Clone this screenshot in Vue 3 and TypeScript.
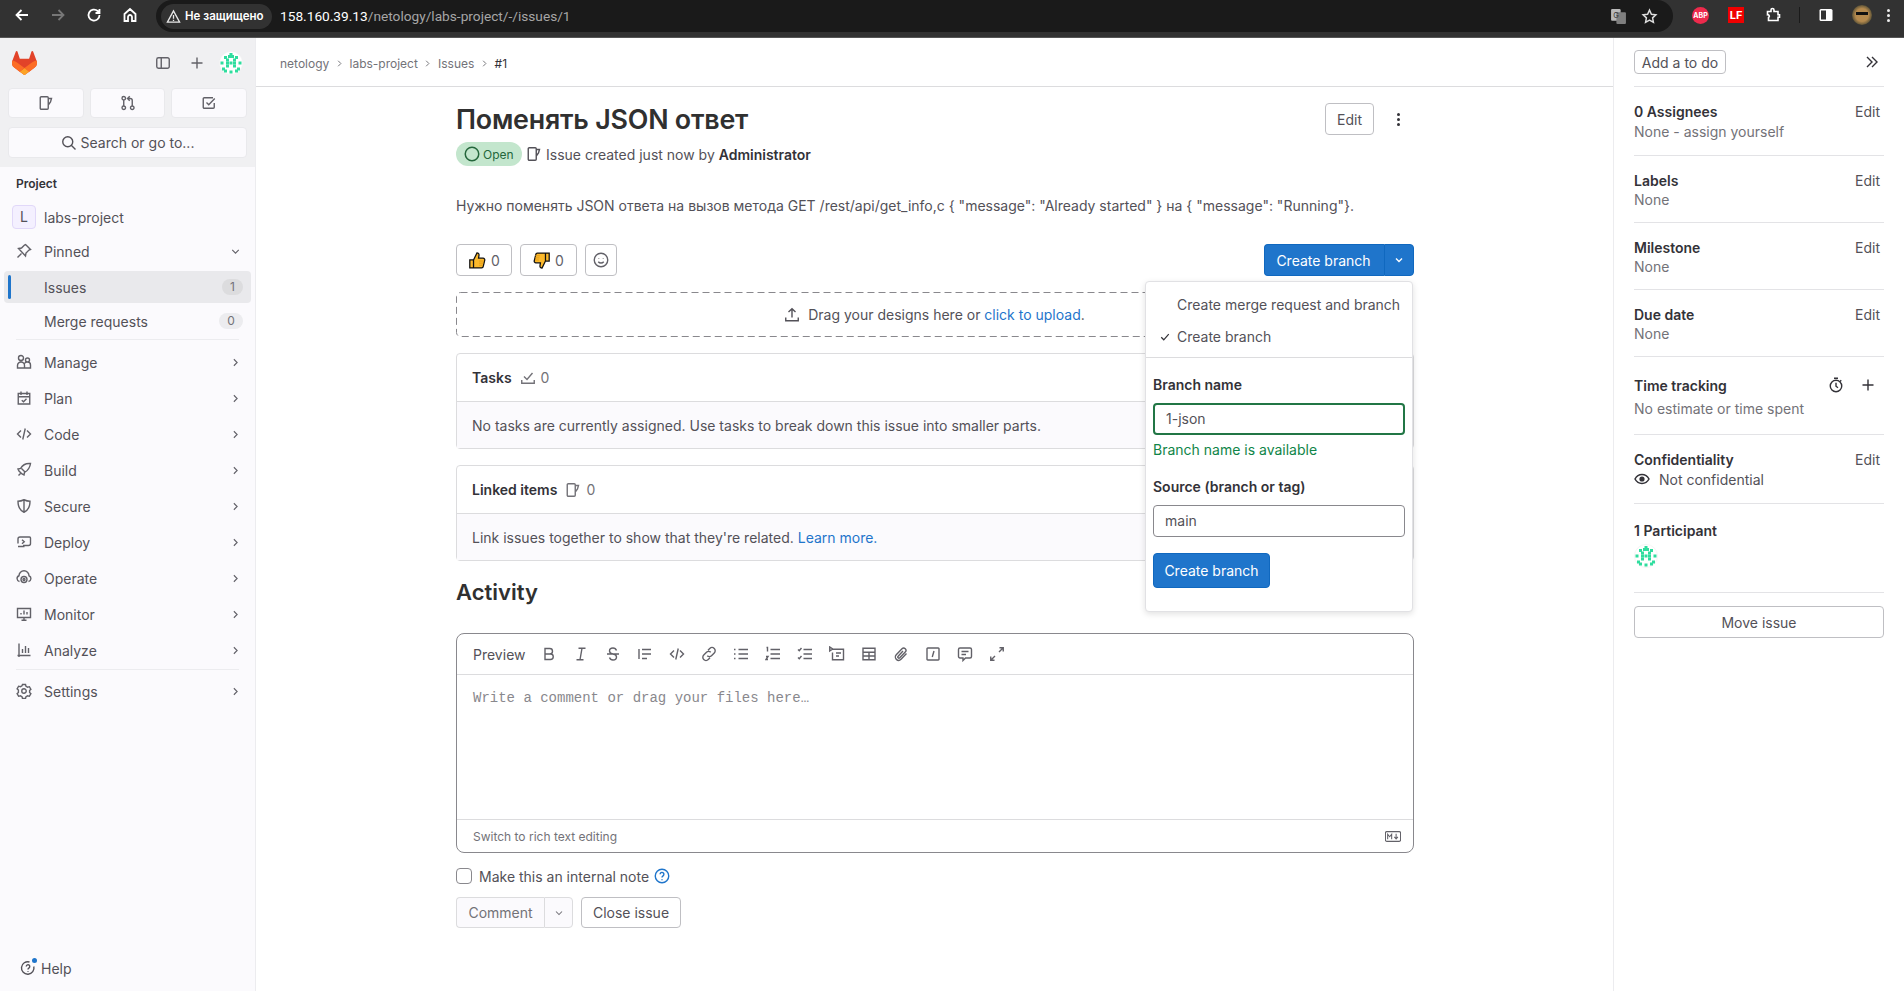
<template>
  <div class="app">
    <header class="browser">
      <svg class="ico chrome-ico" viewBox="0 0 16 16"><path d="M14 8H2.5M7.5 3 2.5 8l5 5" /></svg>
      <svg class="ico chrome-ico dim" viewBox="0 0 16 16"><path d="M2 8h11.5M8.5 3l5 5-5 5" /></svg>
      <svg class="ico chrome-ico" viewBox="0 0 16 16"><path d="M13.5 8A5.5 5.5 0 1 1 11.7 4L13.5 6M13.5 2v4h-4" /></svg>
      <svg class="ico chrome-ico" viewBox="0 0 16 16"><path d="M2.5 7 8 2l5.5 5v7h-3.5v-4a2 2 0 0 0-4 0v4H2.5z" /></svg>
      <div class="omnibox">
        <div class="secure">
          <svg class="warn" viewBox="0 0 16 16"><path d="M8 2 1.5 14h13zM8 6.5v4M8 11.5v1.2" /></svg>
          <span>Не защищено</span>
        </div>
        <div class="url"><b>158.160.39.13</b>/netology/labs-project/-/issues/1</div>
        <svg class="translate" viewBox="0 0 16 16">
          <rect x="1" y="1" width="9" height="11" rx="1" fill="#b9b9b9" />
          <rect x="6" y="4" width="9" height="11" rx="1" fill="#7f7f7f" />
          <text x="3" y="9" font-size="7" fill="#333">G</text>
        </svg>
        <svg class="ico star" viewBox="0 0 16 16"><path d="M8 2l1.8 3.9 4.2.5-3.1 2.9.8 4.2L8 11.4l-3.7 2.1.8-4.2L2 6.4l4.2-.5z" /></svg>
      </div>
      <div class="ext-bar">
        <span class="abp">ABP</span>
        <span class="lf">LF</span>
        <svg class="ico ext" viewBox="0 0 16 16"><path d="M2.5 4.5H6V3a1.5 1.5 0 0 1 3 0v1.5h4v3.2h1.5v2.6H13v3.2H3.5v-3a1.5 1.5 0 0 0-1-2.8z" /></svg>
        <i class="sep"></i>
        <svg class="panel" viewBox="0 0 16 16"><rect x="1.5" y="2" width="13" height="12" rx="1.5" fill="#fff" /><rect x="3" y="3.5" width="5" height="9" fill="#323232" /></svg>
        <span class="me"><i></i></span>
        <span class="kebab-w"><i></i><i></i><i></i></span>
      </div>
    </header>

    <div class="page">
      <aside class="nav">
        <div class="nav-top">
          <div class="nav-brand">
            <svg class="logo" viewBox="0 0 25 24">
              <path fill="#E24329" d="m24.507 9.5-.034-.09L21.082.562a.896.896 0 0 0-1.694.091l-2.29 7.01H7.825L5.535.653a.898.898 0 0 0-1.694-.09L.451 9.411.416 9.5a6.297 6.297 0 0 0 2.09 7.278l.012.01.03.022 5.16 3.867 2.56 1.935 1.554 1.176a1.051 1.051 0 0 0 1.268 0l1.555-1.176 2.56-1.935 5.197-3.89.014-.01A6.297 6.297 0 0 0 24.507 9.5Z" />
              <path fill="#FC6D26" d="m24.507 9.5-.034-.09a11.44 11.44 0 0 0-4.56 2.051l-7.447 5.632 4.742 3.584 5.197-3.89.014-.01A6.297 6.297 0 0 0 24.507 9.5Z" />
              <path fill="#FCA326" d="m7.707 20.677 2.56 1.935 1.555 1.176a1.051 1.051 0 0 0 1.268 0l1.555-1.176 2.56-1.935-4.743-3.584-4.755 3.584Z" />
              <path fill="#FC6D26" d="M5.01 11.461a11.43 11.43 0 0 0-4.56-2.05L.416 9.5a6.297 6.297 0 0 0 2.09 7.278l.012.01.03.022 5.16 3.867 4.745-3.584-7.444-5.632Z" />
            </svg>
            <svg class="ico brand-panel" viewBox="0 0 16 16"><path :d="icons.panel" /></svg>
            <svg class="ico brand-plus" viewBox="0 0 16 16"><path :d="icons.plus" /></svg>
            <svg class="avatar" viewBox="0 0 24 24">
              <circle cx="12" cy="12" r="11.6" fill="#fff" stroke="#eeeeef" stroke-width=".6" />
              <rect v-for="c in identicon" :key="c" :x="c.split(',')[0]" :y="c.split(',')[1]" width="3" height="3" fill="#2fdd9e" />
            </svg>
          </div>
          <div class="quick">
            <button v-for="q in quick" :key="q"><svg class="ico" viewBox="0 0 16 16"><path :d="icons[q]" /></svg></button>
          </div>
          <div class="search">
            <svg class="ico" viewBox="0 0 16 16"><path :d="icons.search" /></svg>
            <span>Search or go to...</span>
          </div>
        </div>

        <div class="nav-list">
          <div class="nav-title">Project</div>
          <div class="nav-row project"><span class="p-badge">L</span><span>labs-project</span></div>
          <div class="nav-row pinned">
            <svg class="ico row-ico" viewBox="0 0 16 16"><path :d="icons.pin" /></svg>
            <span>Pinned</span>
            <svg class="ico chev" viewBox="0 0 16 16"><path :d="icons.down" /></svg>
          </div>
          <div class="sub-row active"><span>Issues</span><em>1</em></div>
          <div class="sub-row"><span>Merge requests</span><em class="wide">0</em></div>
          <hr />
          <div v-for="item in navItems" :key="item.label" class="nav-row tall">
            <svg class="ico row-ico" viewBox="0 0 16 16"><path :d="icons[item.icon]" /></svg>
            <span>{{ item.label }}</span>
            <svg class="ico chev" viewBox="0 0 16 16"><path :d="icons.right" /></svg>
          </div>
          <hr class="tight" />
          <div class="nav-row tall">
            <svg class="ico row-ico" viewBox="0 0 16 16"><path :d="icons.gear" /></svg>
            <span>Settings</span>
            <svg class="ico chev" viewBox="0 0 16 16"><path :d="icons.right" /></svg>
          </div>
        </div>

        <div class="help">
          <svg class="ico" viewBox="0 0 16 16"><path :d="icons.help" /></svg>
          <i class="dot"></i>
          <span>Help</span>
        </div>
      </aside>

      <main class="content">
        <nav class="crumbs">
          <span>netology</span><svg class="ico" viewBox="0 0 16 16"><path :d="icons.right" /></svg>
          <span>labs-project</span><svg class="ico" viewBox="0 0 16 16"><path :d="icons.right" /></svg>
          <span>Issues</span><svg class="ico" viewBox="0 0 16 16"><path :d="icons.right" /></svg>
          <strong>#1</strong>
        </nav>

        <div class="issue">
          <div class="title-row">
            <h1>Поменять JSON ответ</h1>
            <button class="btn edit">Edit</button>
            <span class="kebab"><i></i><i></i><i></i></span>
          </div>
          <div class="meta">
            <span class="status"><svg viewBox="0 0 16 16"><circle cx="8" cy="8" r="6.75" /></svg>Open</span>
            <svg class="ico meta-ico" viewBox="0 0 16 16"><path :d="icons.issue" /></svg>
            <span>Issue created just now by <b>Administrator</b></span>
          </div>
          <p class="desc">Нужно поменять JSON ответа на вызов метода GET /rest/api/get_info,c { "message": "Already started" } на { "message": "Running"}.</p>

          <div class="actions">
            <button class="btn award">
              <svg viewBox="0 0 16 16">
                <path class="thumb" d="M.75 7.5h3.5V15H.75zM4.25 7.5 7.5.9c1.4 0 2.1.9 1.9 2.2L9 5.8h4.3a1.6 1.6 0 0 1 1.5 2l-1.4 5.8a1.6 1.6 0 0 1-1.5 1.4H4.25z" />
                <path class="stripes" d="M9.5 8.5H14M9.5 10.5h4M9.5 12.5H13" />
              </svg>
              <span>0</span>
            </button>
            <button class="btn award">
              <svg viewBox="0 0 16 16">
                <path class="thumb" d="M15.25 8.5h-3.5V1h3.5zM11.75 8.5 8.5 15.1c-1.4 0-2.1-.9-1.9-2.2L7 10.2H2.7a1.6 1.6 0 0 1-1.5-2l1.4-5.8A1.6 1.6 0 0 1 4.1 1h7.65z" />
                <path class="stripes" d="M2 3.5h4.5M2 5.5h4M2 7.5h3.5" />
              </svg>
              <span>0</span>
            </button>
            <button class="btn smile"><svg class="ico" viewBox="0 0 16 16"><path :d="icons.smile" /></svg></button>
            <div class="split">
              <button class="split-main">Create branch</button>
              <button class="split-caret"><svg class="ico" viewBox="0 0 16 16"><path :d="icons.down" /></svg></button>
            </div>
            <div class="dropdown">
              <div class="dd-opts">
                <div class="dd-opt">Create merge request and branch</div>
                <div class="dd-opt"><svg class="ico" viewBox="0 0 16 16"><path d="M2 8.5l4 4 8-9" /></svg>Create branch</div>
              </div>
              <div class="dd-form">
                <label>Branch name</label>
                <div class="field ok">1-json</div>
                <div class="avail">Branch name is available</div>
                <label>Source (branch or tag)</label>
                <div class="field">main</div>
                <button class="form-btn">Create branch</button>
              </div>
            </div>
          </div>

          <div class="upload">
            <svg class="dashes"><rect x=".5" y=".5" rx="4" /></svg>
            <svg class="ico" viewBox="0 0 16 16"><path :d="icons.upload" /></svg>
            <span>Drag your designs here or <a>click to upload</a>.</span>
          </div>

          <section class="card">
            <div class="card-head"><b>Tasks</b><svg class="ico" viewBox="0 0 16 16"><path :d="icons.tasks" /></svg><span>0</span></div>
            <div class="card-body">No tasks are currently assigned. Use tasks to break down this issue into smaller parts.</div>
          </section>
          <section class="card linked">
            <div class="card-head"><b>Linked items</b><svg class="ico" viewBox="0 0 16 16"><path :d="icons.issue" /></svg><span>0</span></div>
            <div class="card-body">Link issues together to show that they're related. <a>Learn more.</a></div>
          </section>

          <h2>Activity</h2>

          <div class="editor">
            <div class="toolbar">
              <span class="preview">Preview</span>
              <span v-for="t in tools" :key="t" class="tool"><svg class="ico" viewBox="0 0 16 16"><path :d="icons[t]" /></svg></span>
            </div>
            <div class="placeholder">Write a comment or drag your files here…</div>
            <div class="editor-foot">
              <span>Switch to rich text editing</span>
              <svg class="md" viewBox="0 0 18 12"><rect x=".5" y=".5" width="17" height="11" rx="1.5" /><path d="M3 9V3.5l2.25 2.75L7.5 3.5V9M12.5 3v5.5M10.5 6.5l2 2.2 2-2.2" /></svg>
            </div>
          </div>

          <div class="note">
            <span class="check"></span>
            <span>Make this an internal note</span>
            <svg class="ico help-blue" viewBox="0 0 16 16"><path :d="icons.helpPlain" /></svg>
          </div>

          <div class="submit">
            <div class="comment-group">
              <button class="comment">Comment</button>
              <button class="comment-caret"><svg class="ico" viewBox="0 0 16 16"><path :d="icons.down" /></svg></button>
            </div>
            <button class="btn close">Close issue</button>
          </div>
        </div>
      </main>

      <aside class="side">
        <div class="side-top">
          <button class="btn todo">Add a to do</button>
          <svg class="ico" viewBox="0 0 16 16"><path d="M3 3l5 5-5 5M8 3l5 5-5 5" /></svg>
        </div>
        <section v-for="s in sideBlocks" :key="s.title" class="side-block" :class="s.cls">
          <div class="side-head"><b>{{ s.title }}</b><span>Edit</span></div>
          <div class="side-sub">{{ s.sub }}</div>
        </section>
        <section class="side-block time">
          <div class="side-head">
            <b>Time tracking</b>
            <svg class="ico watch" viewBox="0 0 16 16"><path :d="icons.timer" /></svg>
            <svg class="ico add" viewBox="0 0 16 16"><path :d="icons.plus" /></svg>
          </div>
          <div class="side-sub">No estimate or time spent</div>
        </section>
        <section class="side-block conf">
          <div class="side-head"><b>Confidentiality</b><span>Edit</span></div>
          <div class="side-conf">
            <svg viewBox="0 0 16 16"><path d="M1 8c1.6-3 4-4.5 7-4.5S13.4 5 15 8c-1.6 3-4 4.5-7 4.5S2.6 11 1 8z" fill="none" stroke="#333238" stroke-width="1.5" /><circle cx="8" cy="8" r="2.6" fill="#333238" /></svg>
            <span>Not confidential</span>
          </div>
        </section>
        <section class="side-block people">
          <div class="side-head"><b>1 Participant</b></div>
          <svg class="avatar" viewBox="0 0 24 24">
            <circle cx="12" cy="12" r="11.6" fill="#fff" stroke="#eeeeef" stroke-width=".6" />
            <rect v-for="c in identicon" :key="c" :x="c.split(',')[0]" :y="c.split(',')[1]" width="3" height="3" fill="#2fdd9e" />
          </svg>
        </section>
        <button class="btn move">Move issue</button>
      </aside>
    </div>
  </div>
</template>

<script setup lang="ts">
const circle = (cx: number, cy: number, r: number) =>
  `M${cx - r} ${cy}a${r} ${r} 0 1 0 ${2 * r} 0a${r} ${r} 0 1 0 ${-2 * r} 0`;

const icons: Record<string, string> = {
  panel: "M3.5 2.75h9a1.75 1.75 0 0 1 1.75 1.75v7a1.75 1.75 0 0 1-1.75 1.75h-9a1.75 1.75 0 0 1-1.75-1.75v-7A1.75 1.75 0 0 1 3.5 2.75zM6.25 2.75v10.5",
  plus: "M8 2.5v11M2.5 8h11",
  issue: "M3.25 1.75h6a1 1 0 0 1 1 1v10.5a1 1 0 0 1-1 1h-6a1 1 0 0 1-1-1V2.75a1 1 0 0 1 1-1zM10.25 3.5h3.25l-1 3.5-2.25 3",
  mr: `${circle(3.75, 3.25, 1.75)}${circle(3.75, 12.75, 1.75)}${circle(12.25, 12.75, 1.75)}M3.75 5v6M12.25 11V5.5a2 2 0 0 0-2-2H8M9.75 1.25 7.5 3.5l2.25 2.25`,
  todo: "M13.25 8v4.25a1 1 0 0 1-1 1h-9a1 1 0 0 1-1-1v-8.5a1 1 0 0 1 1-1H12M5.5 7.5l2.25 2.25L13.75 3.5",
  search: `${circle(6.75, 6.75, 5)}M10.5 10.5l4 4`,
  pin: "M9.5 1.5l5 5-1.5.5-3 3-.5 3L2.5 5.5l3-.5 3-3zM5.5 10.5l-4 4",
  down: "M4 6l4 4 4-4",
  right: "M6 4l4 4-4 4",
  users: `${circle(5, 4, 2.5)}${circle(11.5, 6, 2)}M1.5 14v-2.5A3.5 3.5 0 0 1 5 8a3.5 3.5 0 0 1 3.5 3.5V14zM8.5 14h6v-3a3 3 0 0 0-3-3 3 3 0 0 0-3 1.5`,
  plan: "M2.25 3.5h11.5v10.5H2.25zM5 1.5v3.5M11 1.5v3.5M2.25 6.75h11.5M5.75 10.25l1.75 1.5 3-3",
  code: "M5 4.5 1.5 8 5 11.5M11 4.5 14.5 8 11 11.5M9.25 2.5l-2.5 11",
  rocket: "M14.5 1.5c-5-.5-8 1.5-10 5l-2.5.5 1 2 3 3 2 1 .5-2.5c3.5-2 5.5-5 6-9zM2.5 13.5l2-2M5.5 6.5l4 4",
  shield: "M8 1.75c2 1 4 1.5 6 1.5 0 5-1.5 9-6 11-4.5-2-6-6-6-11 2 0 4-.5 6-1.5zM8 1.75v12.5",
  deploy: "M2 5a2 2 0 0 1 2-2h9.5a1 1 0 0 1 1 1v5.5a2 2 0 0 1-2 2H7M2 5v4.5M2 12.5h6.5M6 5.75 8.25 7.75 6 9.75",
  operate: `M3.5 11.5a3 3 0 0 1-.5-5.75 5 5 0 0 1 10 0 3 3 0 0 1-.5 5.75${circle(8, 9.5, 3)}${circle(8, 9.5, 1)}`,
  monitor: "M1.5 2.5h13v9h-13zM5.5 14.25h5M8 11.5v2.75M5 8.5V7M8 8.5V4.5M11 8.5V6",
  chart: "M1.5 13.5h13M3 1.5v13.5M6.5 7v4M9.5 4v7M12.5 6v5",
  gear: `M6.5 1.5h3l.5 1.8 1.6.9 1.8-.5 1.5 2.6-1.3 1.3v1.8l1.3 1.3-1.5 2.6-1.8-.5-1.6.9-.5 1.8h-3l-.5-1.8-1.6-.9-1.8.5-1.5-2.6 1.3-1.3V7.1L1.1 5.8l1.5-2.6 1.8.5L6 2.8z${circle(8, 8, 2.25)}`,
  help: "M13.8 6.5A6.25 6.25 0 1 1 9.5 2M6.25 6.5a1.75 1.75 0 1 1 2.8 1.4c-.6.4-1.05.8-1.05 1.6M8 11.2v.8",
  helpPlain: `${circle(8, 8, 6.75)}M6.1 6.3a1.9 1.9 0 1 1 3 1.55c-.65.45-1.1.85-1.1 1.65M8 11.3v.9`,
  smile: `${circle(8, 8, 6.75)}M5.25 9.75c1.5 1.7 4 1.7 5.5 0M5.75 6v.5M10.25 6v.5`,
  upload: "M8 10.5V1.75M4.5 5 8 1.75 11.5 5M1.75 10.5v3.25h12.5V10.5",
  tasks: "M1.75 10v3.25h12.5V10M4 6.5l3 3L12.5 3",
  bold: "M4 2.5h4.75a2.75 2.75 0 0 1 0 5.5H4zM4 8h5.5a2.75 2.75 0 0 1 0 5.5H4z",
  italic: "M5.5 2.25h7M3.5 13.75h7M9 2.25 7 13.75",
  strike: "M2 8h12M11.5 4.5C11 3 9.5 2 8 2 6 2 4.5 3.25 4.5 5c0 1.5 1 2.5 3.5 3s3.5 1.5 3.5 3c0 1.75-1.5 3-3.5 3-1.5 0-3-1-3.5-2.5",
  quote: "M2 3v10M5 3.5h9M5 8h9M5 12.5h5",
  link: "M7 4.25 8.75 2.5a3 3 0 0 1 4.5 4.5L10.5 9.75a3 3 0 0 1-4.25 0M9 11.75 7.25 13.5a3 3 0 0 1-4.5-4.5L5.5 6.25a3 3 0 0 1 4.25 0",
  ul: "M5.5 3.5H15M5.5 8H15M5.5 12.5H15M1 3.5h1.5M1 8h1.5M1 12.5h1.5",
  ol: "M5.5 3.5H15M5.5 8H15M5.5 12.5H15M1.5 1.5h1v4M1 10.5h2l-2 3h2",
  task: "M6.5 3.5H15M6.5 8H15M6.5 12.5H15M1 3.5l1.25 1.25L4.5 2M1 11.5l1.25 1.25L4.5 10",
  collapse: "M4 3.25h10.5v10.5H3.5V6.5M7 7h5M7 10h3M.75 1v4l3-2z",
  table: "M2 2.25h12v11.5H2zM2 6.25h12M2 10h12M8 6.25v7.5",
  attach: "M13.5 7.5 8 13.25a3.25 3.25 0 0 1-4.75-4.5L9 2.75a2.25 2.25 0 0 1 3.25 3.25l-5.5 5.75a1.1 1.1 0 0 1-1.6-1.6L10 5",
  slash: "M2.75 2h10.5a.75.75 0 0 1 .75.75v10.5a.75.75 0 0 1-.75.75H2.75a.75.75 0 0 1-.75-.75V2.75A.75.75 0 0 1 2.75 2zM9 5l-1.75 6",
  comment: "M3 2h10a1.5 1.5 0 0 1 1.5 1.5v7A1.5 1.5 0 0 1 13 12H8.5L6 14.5V12H3a1.5 1.5 0 0 1-1.5-1.5v-7A1.5 1.5 0 0 1 3 2zM4.5 5.5h7M4.5 8.5H9",
  expand: "M10 6l4-4M10.5 1.75h3.75V5.5M6 10l-4 4M1.75 10.5v3.75H5.5",
  timer: `${circle(8, 9, 5.75)}M6 1.25h4M8 5.75v3.5l2 1.5M12.25 3.25l1 1`,
};

const quick = ["issue", "mr", "todo"];

const navItems = [
  { label: "Manage", icon: "users" },
  { label: "Plan", icon: "plan" },
  { label: "Code", icon: "code" },
  { label: "Build", icon: "rocket" },
  { label: "Secure", icon: "shield" },
  { label: "Deploy", icon: "deploy" },
  { label: "Operate", icon: "operate" },
  { label: "Monitor", icon: "monitor" },
  { label: "Analyze", icon: "chart" },
];

const tools = ["bold", "italic", "strike", "quote", "code", "link", "ul", "ol", "task", "collapse", "table", "attach", "slash", "comment", "expand"];

const sideBlocks = [
  { title: "0 Assignees", sub: "None - assign yourself", cls: "first" },
  { title: "Labels", sub: "None", cls: "" },
  { title: "Milestone", sub: "None", cls: "" },
  { title: "Due date", sub: "None", cls: "" },
];

// x,y of the green cells in the generated user avatar
const identicon = [
  "10.5,2", "9,4", "12,4", "5,5", "16,5", "7,7.5", "14,7.5", "1.5,10.5", "7,10.5", "10.5,10.5", "14,10.5", "19.5,10.5",
  "7,13.5", "14,13.5", "3,16.5", "18,16.5", "5,18.5", "16,18.5", "10.5,19.5",
];
</script>

<style>
html,
body {
  margin: 0;
  background: #fff;
  overflow: hidden;
}
</style>

<style scoped>
.app {
  width: 1904px;
  height: 991px;
  font-family: Inter, "Noto Sans", sans-serif;
  font-size: 14px;
  color: #535158;
  overflow: hidden;
}

button {
  font: inherit;
  margin: 0;
}

.ico {
  width: 16px;
  height: 16px;
  fill: none;
  stroke: currentColor;
  stroke-width: 1.4;
  flex: none;
}

/* -------- browser chrome -------- */
.browser {
  height: 37px;
  background: #323232;
  border-bottom: 1px solid #555;
  display: flex;
  align-items: flex-start;
  padding-left: 14px;
  color: #fff;
}

.chrome-ico {
  width: 16px;
  height: 16px;
  margin: 7px 20px 0 0;
  stroke-width: 1.8;
}

.chrome-ico.dim {
  color: #777;
}

.omnibox {
  margin: 0 0 0 -2px;
  width: 1517px;
  height: 32px;
  background: #1a1a1a;
  border-radius: 16px;
  display: flex;
  align-items: center;
  padding-left: 5px;
  box-sizing: border-box;
  flex: none;
}

.secure {
  height: 25px;
  width: 111px;
  box-sizing: border-box;
  background: #323232;
  border-radius: 13px;
  display: flex;
  align-items: center;
  gap: 4px;
  padding-left: 5px;
  font-size: 11.5px;
  font-weight: 600;
  color: #fff;
  white-space: nowrap;
}

.warn {
  width: 15px;
  height: 15px;
  fill: none;
  stroke: #e8e8e8;
  stroke-width: 1.4;
  flex: none;
}

.url {
  margin-left: 8px;
  font-family: Roboto, sans-serif;
  font-size: 13.7px;
  color: #a6a6a6;
  white-space: nowrap;
}

.url b {
  font-weight: 400;
  color: #fff;
}

.translate {
  width: 17px;
  height: 17px;
  margin-left: auto;
}

.star {
  width: 17px;
  height: 17px;
  margin: 0 15px 0 14px;
  color: #ddd;
}

.ext-bar {
  display: flex;
  align-items: center;
  height: 30px;
  flex: 1;
}

.abp {
  width: 17px;
  height: 17px;
  margin-left: 19px;
  border-radius: 50%;
  background: #ed2a4c;
  color: #fff;
  font-size: 7px;
  font-weight: 700;
  text-align: center;
  line-height: 17px;
  flex: none;
}

.lf {
  width: 16px;
  height: 16px;
  margin-left: 19px;
  background: #f00000;
  color: #fff;
  font-size: 11px;
  font-weight: 700;
  line-height: 16px;
  text-align: center;
  flex: none;
}

.ext {
  margin-left: 21px;
  stroke-width: 1.6;
}

.sep {
  width: 1px;
  height: 16px;
  background: #1a1a1a;
  margin-left: 18px;
  flex: none;
}

.panel {
  width: 16px;
  height: 16px;
  margin-left: 18px;
  flex: none;
}

.me {
  width: 20px;
  height: 20px;
  margin-left: 18px;
  border-radius: 50%;
  background: radial-gradient(circle, #b58a4e 0 45%, #4f4a33 75%);
  position: relative;
  flex: none;
}

.me i {
  position: absolute;
  left: 4px;
  top: 7px;
  width: 12px;
  height: 3px;
  background: #111;
}

.kebab-w {
  margin-left: 15px;
  display: flex;
  flex-direction: column;
  gap: 2px;
}

.kebab-w i {
  width: 3px;
  height: 3px;
  border-radius: 50%;
  background: #eee;
}

/* -------- layout -------- */
.page {
  display: flex;
  height: 953px;
}

.nav {
  width: 255px;
  flex: none;
  background: #fbfafd;
  border-right: 1px solid #ececef;
  display: flex;
  flex-direction: column;
}

.content {
  flex: 1;
  min-width: 0;
}

.side {
  flex: none;
  width: 291px;
  border-left: 1px solid #ececef;
  padding: 0 20px;
  box-sizing: border-box;
}

/* -------- left nav -------- */
.nav-top {
  background: #f0f0f2;
  padding: 13px 8px 9px;
}

.nav-brand {
  display: flex;
  align-items: center;
  height: 24px;
  padding-left: 4px;
  color: #626168;
}

.logo {
  width: 25px;
  height: 24px;
}

.brand-panel {
  margin-left: 118px;
}

.brand-plus {
  margin-left: 18px;
}

.avatar {
  width: 24px;
  height: 24px;
  display: block;
}

.nav-brand .avatar {
  margin-left: 14px;
}

.quick {
  display: flex;
  gap: 6px;
  margin-top: 13px;
}

.quick button {
  flex: 1;
  height: 30px;
  border: 1px solid #e9e9ec;
  border-radius: 4px;
  background: #fbfafd;
  color: #626168;
  display: flex;
  align-items: center;
  justify-content: center;
  padding: 0;
}

.search {
  margin-top: 9px;
  height: 31px;
  border: 1px solid #e9e9ec;
  border-radius: 4px;
  background: #fbfafd;
  box-sizing: border-box;
  display: flex;
  align-items: center;
  justify-content: center;
  gap: 4px;
  color: #535158;
}

.nav-list {
  padding: 0 4px;
}

.nav-title {
  height: 33px;
  line-height: 34px;
  padding-left: 12px;
  font-size: 12px;
  font-weight: 600;
  color: #333238;
}

.nav-row {
  height: 34px;
  display: flex;
  align-items: center;
  color: #535158;
}

.nav-row.tall {
  height: 36px;
}

.project span:last-child {
  margin-left: 8px;
}

.p-badge {
  width: 24px;
  height: 24px;
  margin-left: 8px;
  border: 1px solid #e1d8f9;
  border-radius: 4px;
  background: #f4f0ff;
  box-sizing: border-box;
  text-align: center;
  line-height: 22px;
}

.row-ico {
  margin-left: 12px;
  margin-right: 12px;
  color: #626168;
}

.chev {
  width: 13px;
  height: 13px;
  margin-left: auto;
  margin-right: 9px;
  color: #626168;
}

.sub-row {
  height: 32px;
  margin: 2px 0;
  padding: 0 8px 0 40px;
  display: flex;
  align-items: center;
  justify-content: space-between;
  border-radius: 4px;
  position: relative;
}

.sub-row.active {
  background: #e9e9ec;
  margin-top: 3px;
}

.sub-row.active::before {
  content: "";
  position: absolute;
  left: 4px;
  top: 4px;
  bottom: 4px;
  width: 3px;
  border-radius: 2px;
  background: #1f75cb;
}

.sub-row em {
  font-style: normal;
  font-size: 12px;
  width: 21px;
  height: 16px;
  line-height: 16px;
  border-radius: 8px;
  background: #dcdcde;
  color: #737278;
  text-align: center;
}

.sub-row em.wide {
  width: 24px;
  background: #ececef;
}

hr {
  border: 0;
  border-top: 1px solid #ececef;
  margin: 1px 12px 4px;
}

hr.tight {
  margin: 1px 12px 3px;
}

.help {
  margin-top: auto;
  height: 20px;
  margin-bottom: 13px;
  padding-left: 20px;
  display: flex;
  align-items: center;
  gap: 5px;
  position: relative;
  color: #535158;
}

.dot {
  position: absolute;
  left: 32px;
  top: 0;
  width: 5px;
  height: 5px;
  border-radius: 50%;
  background: #1f75cb;
}

/* -------- main -------- */
.crumbs {
  height: 46px;
  padding: 2px 0 0 24px;
  border-bottom: 1px solid #dcdcde;
  display: flex;
  align-items: center;
  gap: 1.6px;
  font-size: 12px;
  color: #737278;
}

.crumbs .ico {
  width: 11px;
  height: 11px;
  margin: 0 3px;
}

.crumbs strong {
  font-weight: 400;
  color: #333238;
}

.issue {
  margin: 0 199px 0 200px;
}

.title-row {
  height: 32px;
  padding-top: 16px;
  display: flex;
  align-items: center;
}

h1 {
  margin: 0;
  font-size: 26.8px;
  font-weight: 600;
  color: #303030;
  letter-spacing: -0.2px;
  flex: 1;
}

.btn {
  border: 1px solid #bfbfc3;
  border-radius: 4px;
  background: #fff;
  color: #535158;
  box-sizing: border-box;
  padding: 0;
}

.edit {
  width: 49px;
  height: 32px;
}

.kebab {
  width: 40px;
  display: flex;
  flex-direction: column;
  align-items: flex-end;
  padding-right: 14px;
  box-sizing: border-box;
  gap: 2px;
}

.kebab i {
  width: 3px;
  height: 3px;
  border-radius: 50%;
  background: #333238;
}

.meta {
  height: 24px;
  margin-top: 7px;
  display: flex;
  align-items: center;
  color: #535158;
}

.meta b {
  font-weight: 600;
  color: #333238;
}

.status {
  width: 66px;
  height: 24px;
  border-radius: 12px;
  background: #c3e6cd;
  color: #24663b;
  font-size: 12px;
  display: flex;
  align-items: center;
  gap: 3px;
  padding-left: 8px;
  box-sizing: border-box;
}

.status svg {
  width: 16px;
  height: 16px;
  fill: none;
  stroke: #24663b;
  stroke-width: 1.5;
}

.meta-ico {
  margin: 0 4px;
}

.desc {
  margin: 28px 0 0;
  height: 24px;
  line-height: 24px;
  color: #535158;
}

.actions {
  margin-top: 26px;
  height: 32px;
  display: flex;
  gap: 8px;
  position: relative;
}

.award {
  height: 32px;
  width: 56px;
  display: flex;
  align-items: center;
  gap: 5px;
  padding-left: 12px;
  color: #626168;
}

.award + .award {
  width: 57px;
}

.award svg {
  width: 17px;
  height: 17px;
}

.thumb {
  fill: #fcb92b;
  stroke: #111;
  stroke-width: 1.2;
}

.stripes {
  fill: none;
  stroke: #e09a14;
  stroke-width: 0.8;
}

.smile {
  width: 32px;
  height: 32px;
  color: #626168;
  display: flex;
  align-items: center;
  justify-content: center;
}

.split {
  margin-left: auto;
  display: flex;
  height: 32px;
}

.split button {
  border: 1px solid #1068bf;
  background: #1f75cb;
  color: #fff;
  height: 32px;
}

.split-main {
  width: 120px;
  padding: 0 2px 0 0;
  border-radius: 4px 0 0 4px;
  border-right: 0 !important;
}

.split-caret {
  width: 30px;
  padding: 0;
  border-radius: 0 4px 4px 0;
  display: flex;
  align-items: center;
  justify-content: center;
}

.split-caret .ico {
  width: 12px;
  height: 12px;
  stroke-width: 1.8;
}

.dropdown {
  position: absolute;
  right: 1px;
  top: 37px;
  width: 268px;
  height: 331px;
  background: #fff;
  border: 1px solid #e1e1e4;
  border-radius: 4px;
  box-shadow: 0 2px 6px rgba(0, 0, 0, 0.12);
  box-sizing: border-box;
  z-index: 3;
}

.dd-opts {
  padding-top: 7px;
  height: 76px;
  box-sizing: border-box;
  border-bottom: 1px solid #dcdcde;
}

.dd-opt {
  height: 32px;
  line-height: 32px;
  padding-left: 31px;
  position: relative;
}

.dd-opt .ico {
  position: absolute;
  left: 14px;
  top: 11px;
  width: 10px;
  height: 10px;
  stroke-width: 2;
  color: #333238;
}

.dd-form {
  padding: 16px 7px 0;
}

.dd-form label {
  display: block;
  height: 22px;
  line-height: 22px;
  font-weight: 600;
  color: #333238;
}

.field {
  margin-top: 7px;
  height: 32px;
  box-sizing: border-box;
  border: 1px solid #89888d;
  border-radius: 4px;
  padding: 0 11px;
  line-height: 30px;
  color: #535158;
}

.field.ok {
  border: 2px solid #217645;
  line-height: 28px;
}

.avail {
  height: 30px;
  line-height: 30px;
  color: #108548;
}

.avail + label {
  margin-top: 11px;
}

.form-btn {
  margin-top: 16px;
  width: 117px;
  height: 35px;
  padding: 0;
  border: 1px solid #1068bf;
  border-radius: 4px;
  background: #1f75cb;
  color: #fff;
}

.upload {
  margin: 16px 1px 0 0;
  height: 45px;
  position: relative;
  display: flex;
  align-items: center;
  justify-content: center;
  gap: 8px;
}

.dashes {
  position: absolute;
  inset: 0;
  width: 100%;
  height: 100%;
}

.dashes rect {
  width: calc(100% - 1px);
  height: calc(100% - 1px);
  fill: none;
  stroke: #89888d;
  stroke-dasharray: 7 4;
}

.upload a,
.card-body a {
  color: #1f75cb;
}

.card {
  margin-top: 16px;
  height: 96px;
  border: 1px solid #dcdcde;
  border-radius: 4px;
  box-sizing: border-box;
}

.card-head {
  height: 48px;
  border-bottom: 1px solid #dcdcde;
  padding-left: 15px;
  display: flex;
  align-items: center;
  gap: 5px;
  box-sizing: border-box;
  color: #737278;
}

.card-head b {
  font-weight: 600;
  color: #333238;
  margin-right: 3px;
}

.card-body {
  height: 46px;
  line-height: 47px;
  padding-left: 15px;
  background: #fbfafd;
  color: #535158;
}

h2 {
  margin: 11px 0 0;
  height: 40px;
  line-height: 40px;
  font-size: 22px;
  font-weight: 600;
  color: #303030;
}

.editor {
  margin-top: 21px;
  height: 220px;
  border: 1px solid #89888d;
  border-radius: 8px;
  box-sizing: border-box;
  display: flex;
  flex-direction: column;
}

.toolbar {
  height: 40px;
  border-bottom: 1px solid #dcdcde;
  padding-left: 16px;
  display: flex;
  align-items: center;
  flex: none;
}

.preview {
  width: 60px;
}

.tool {
  width: 32px;
  display: flex;
  justify-content: center;
  color: #626168;
}

.placeholder {
  flex: 1;
  padding: 13px 16px;
  font-family: "Liberation Mono", monospace;
  font-size: 14px;
  line-height: 20px;
  color: #89888d;
}

.editor-foot {
  height: 33px;
  border-top: 1px solid #dcdcde;
  padding: 0 12px 0 16px;
  box-sizing: border-box;
  display: flex;
  align-items: center;
  justify-content: space-between;
  font-size: 12px;
  color: #737278;
  flex: none;
}

.md {
  width: 16px;
  height: 11px;
  fill: none;
  stroke: #626168;
  stroke-width: 1.2;
}

.note {
  margin-top: 13px;
  height: 20px;
  display: flex;
  align-items: center;
}

.check {
  width: 16px;
  height: 16px;
  box-sizing: border-box;
  border: 1px solid #89888d;
  border-radius: 4px;
  margin-right: 7px;
}

.help-blue {
  margin-left: 5px;
  color: #1f75cb;
}

.submit {
  margin-top: 11px;
  display: flex;
  gap: 8px;
}

.comment-group {
  display: flex;
  height: 31px;
}

.comment-group button {
  background: #fbfafd;
  border: 1px solid #dcdcde;
  color: #737278;
  padding: 0;
}

.comment {
  width: 88px;
  border-radius: 4px 0 0 4px;
  border-right: 0 !important;
}

.comment-caret {
  width: 29px;
  border-radius: 0 4px 4px 0;
  display: flex;
  align-items: center;
  justify-content: center;
}

.comment-caret .ico {
  width: 12px;
  height: 12px;
}

.close {
  width: 100px;
  height: 31px;
}

/* -------- right sidebar -------- */
.side-top {
  height: 49px;
  border-bottom: 1px solid #e3e3e6;
  display: flex;
  align-items: center;
  justify-content: space-between;
  box-sizing: border-box;
  padding-right: 4px;
  color: #333238;
}

.todo {
  width: 92px;
  height: 24px;
}

.side-block {
  border-bottom: 1px solid #e3e3e6;
  height: 67px;
  padding-top: 14px;
  box-sizing: border-box;
}

.side-block.first {
  height: 69px;
}

.side-block.first .side-sub {
  margin-top: 1px;
}

.side-head {
  display: flex;
  align-items: center;
  justify-content: space-between;
  height: 20px;
  padding-right: 4px;
}

.side-head b {
  font-weight: 600;
  color: #333238;
  flex: 1;
}

.side-sub {
  height: 20px;
  line-height: 20px;
  color: #737278;
}

.side-block.time {
  height: 78px;
  padding-top: 18px;
}

.side-block.time .side-sub {
  margin-top: 4px;
}

.watch {
  margin-right: 16px;
  margin-left: -2px;
  color: #333238;
}

.add {
  margin-right: 4px;
  color: #333238;
}

.side-block.conf {
  height: 69px;
}

.side-conf {
  display: flex;
  align-items: center;
  gap: 9px;
  height: 20px;
  color: #535158;
}

.side-conf svg {
  width: 16px;
  height: 16px;
}

.side-block.people {
  height: 89px;
  padding-top: 16px;
}

.people .avatar {
  margin-top: 4px;
}

.move {
  width: 250px;
  height: 32px;
  margin-top: 13px;
}
</style>
